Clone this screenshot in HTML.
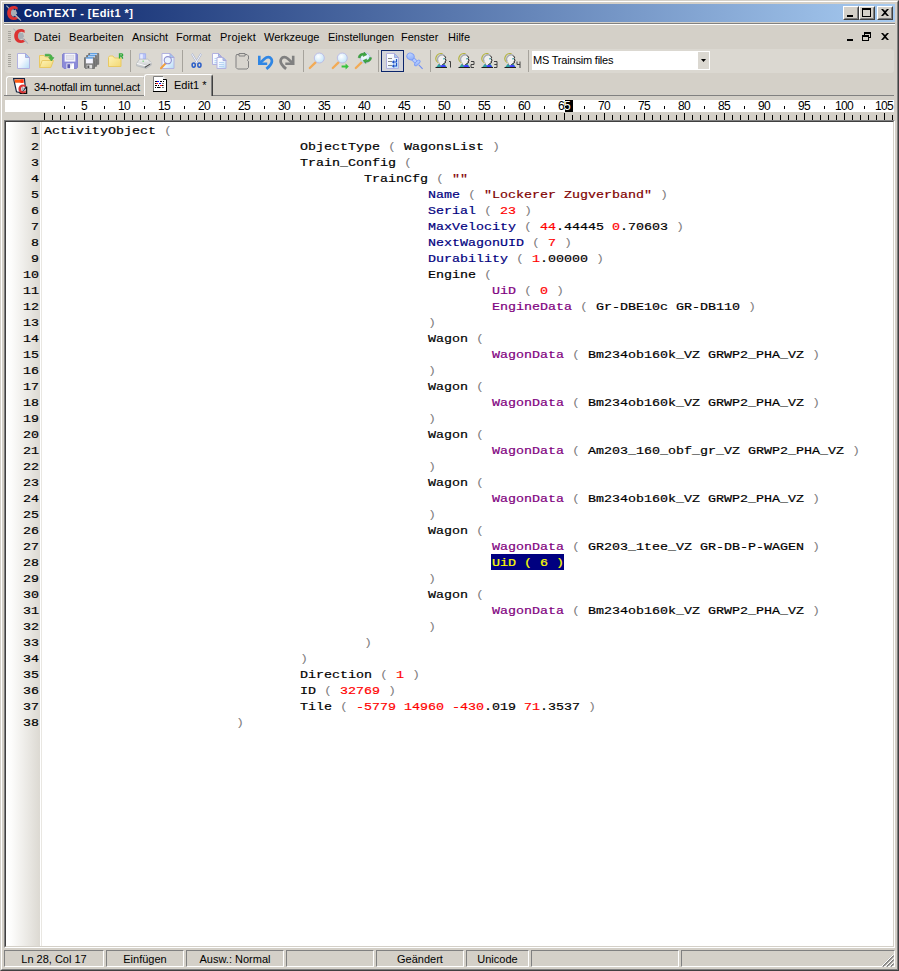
<!DOCTYPE html><html><head><meta charset="utf-8"><title>ConTEXT - [Edit1 *]</title><style>
*{margin:0;padding:0;box-sizing:border-box}
html,body{width:899px;height:971px;overflow:hidden;background:#d4d0c8}
body{position:relative;font-family:"Liberation Sans",sans-serif;font-size:11px;color:#000}
.a{position:absolute}
.t{position:absolute;white-space:pre;line-height:13px;height:13px}
.ln{position:absolute;left:0;width:39px;text-align:right;font:11.8px/16px "Liberation Mono",monospace;-webkit-text-stroke:0.2px;transform:scaleX(1.1299);transform-origin:100% 0;height:16px;color:#000}
.cl{position:absolute;left:44px;white-space:pre;font:11.8px/16px "Liberation Mono",monospace;-webkit-text-stroke:0.2px;transform:scaleX(1.1299);transform-origin:0 0;height:16px;color:#000}
.k{color:#000080}.p{color:#800080}.g{color:#808080;-webkit-text-stroke:0}.r{color:#ff0000}.s{color:#800000}
.sel{color:#ffff00}
.rn{position:absolute;top:100px;width:40px;text-align:center;font-size:12px;letter-spacing:-0.7px;line-height:13px;height:13px}
.sb{position:absolute;top:950px;height:17px;border:1px solid;border-color:#808080 #fff #fff #808080;text-align:center;font-size:11px;line-height:17px}
</style></head><body>
<div class="a" style="left:0;top:0;width:899px;height:971px;border:1px solid;border-color:#d4d0c8 #404040 #404040 #d4d0c8"></div>
<div class="a" style="left:1px;top:1px;width:897px;height:969px;border:1px solid;border-color:#fff #808080 #808080 #fff"></div>
<div class="a" style="left:4px;top:4px;width:891px;height:18px;background:linear-gradient(90deg,#0a246a,#a6caf0)"></div>
<div class="t" style="left:24px;top:6px;color:#fff;font-weight:bold;font-size:11px;line-height:14px;height:14px;letter-spacing:0.45px">ConTEXT - [Edit1 *]</div>
<div class="a" style="left:843px;top:6px;width:16px;height:14px;background:#d4d0c8;border:1px solid;border-color:#fff #404040 #404040 #fff"><div class="a" style="left:0;top:0;width:14px;height:12px;border:1px solid;border-color:#d4d0c8 #808080 #808080 #d4d0c8"></div><div class="a" style="left:3px;top:8px;width:6px;height:2px;background:#000"></div></div>
<div class="a" style="left:859px;top:6px;width:16px;height:14px;background:#d4d0c8;border:1px solid;border-color:#fff #404040 #404040 #fff"><div class="a" style="left:0;top:0;width:14px;height:12px;border:1px solid;border-color:#d4d0c8 #808080 #808080 #d4d0c8"></div><div class="a" style="left:2px;top:1px;width:9px;height:9px;border:1px solid #000;border-top-width:2px"></div></div>
<div class="a" style="left:877px;top:6px;width:16px;height:14px;background:#d4d0c8;border:1px solid;border-color:#fff #404040 #404040 #fff"><div class="a" style="left:0;top:0;width:14px;height:12px;border:1px solid;border-color:#d4d0c8 #808080 #808080 #d4d0c8"></div><svg class="a" style="left:3px;top:2px" width="8" height="7" viewBox="0 0 8 7"><path d="M0 0h2L4 2 6 0h2L5 3.5 8 7H6L4 5 2 7H0L3 3.5z" fill="#000"/></svg></div>
<div class="a" style="left:4px;top:23px;width:891px;height:1px;background:#808080"></div>
<div class="a" style="left:4px;top:24px;width:891px;height:1px;background:#fff"></div>
<div class="a" style="left:8px;top:31px;width:3px;height:1px;background:#a6a39c"></div>
<div class="a" style="left:8px;top:33px;width:3px;height:1px;background:#a6a39c"></div>
<div class="a" style="left:8px;top:35px;width:3px;height:1px;background:#a6a39c"></div>
<div class="a" style="left:8px;top:37px;width:3px;height:1px;background:#a6a39c"></div>
<div class="a" style="left:8px;top:39px;width:3px;height:1px;background:#a6a39c"></div>
<div class="a" style="left:8px;top:41px;width:3px;height:1px;background:#a6a39c"></div>
<div class="t" style="left:34px;top:31px;letter-spacing:0.2px;">Datei</div>
<div class="t" style="left:69px;top:31px;letter-spacing:0.15px;">Bearbeiten</div>
<div class="t" style="left:132px;top:31px;">Ansicht</div>
<div class="t" style="left:176px;top:31px;">Format</div>
<div class="t" style="left:220px;top:31px;letter-spacing:0.25px;">Projekt</div>
<div class="t" style="left:264px;top:31px;">Werkzeuge</div>
<div class="t" style="left:328px;top:31px;">Einstellungen</div>
<div class="t" style="left:401px;top:31px;">Fenster</div>
<div class="t" style="left:448px;top:31px;">Hilfe</div>
<div class="a" style="left:847px;top:39px;width:6px;height:2px;background:#000"></div>
<div class="a" style="left:864px;top:32px;width:7px;height:6px;border:1px solid #000;border-top-width:2px"></div>
<div class="a" style="left:862px;top:35px;width:7px;height:6px;border:1px solid #000;border-top-width:2px;background:#d4d0c8"></div>
<svg class="a" style="left:881px;top:33px" width="8" height="7" viewBox="0 0 8 7"><path d="M0 0h2L4 2 6 0h2L5 3.5 8 7H6L4 5 2 7H0L3 3.5z" fill="#000"/></svg>
<div class="a" style="left:5px;top:49px;width:889px;height:24px;background:#dbd8d1;border-radius:3px"></div>
<div class="a" style="left:8px;top:54px;width:3px;height:1px;background:#a6a39c"></div>
<div class="a" style="left:8px;top:56px;width:3px;height:1px;background:#a6a39c"></div>
<div class="a" style="left:8px;top:58px;width:3px;height:1px;background:#a6a39c"></div>
<div class="a" style="left:8px;top:60px;width:3px;height:1px;background:#a6a39c"></div>
<div class="a" style="left:8px;top:62px;width:3px;height:1px;background:#a6a39c"></div>
<div class="a" style="left:8px;top:64px;width:3px;height:1px;background:#a6a39c"></div>
<div class="a" style="left:8px;top:66px;width:3px;height:1px;background:#a6a39c"></div>
<div class="a" style="left:130px;top:50px;width:1px;height:22px;background:#a6a39c"></div>
<div class="a" style="left:182px;top:50px;width:1px;height:22px;background:#a6a39c"></div>
<div class="a" style="left:303px;top:50px;width:1px;height:22px;background:#a6a39c"></div>
<div class="a" style="left:378px;top:50px;width:1px;height:22px;background:#a6a39c"></div>
<div class="a" style="left:430px;top:50px;width:1px;height:22px;background:#a6a39c"></div>
<div class="a" style="left:528px;top:50px;width:1px;height:22px;background:#a6a39c"></div>
<div class="a" style="left:532px;top:51px;width:178px;height:19px;background:#fff"></div>
<div class="a" style="left:698px;top:52px;width:11px;height:17px;background:#dbd8d1"></div>
<svg class="a" style="left:701px;top:59px" width="5" height="3" viewBox="0 0 5 3"><path d="M0 0h5L2.5 3z" fill="#000"/></svg>
<div class="t" style="left:533px;top:54px;letter-spacing:-0.2px">MS Trainsim files</div>
<div class="a" style="left:4px;top:95px;width:890px;height:1px;background:#808080"></div>
<div class="a" style="left:6px;top:76px;width:139px;height:19px;border:1px solid;border-color:#fff #808080 transparent #fff;border-bottom:0;border-radius:3px 3px 0 0"></div>
<div class="t" style="left:34px;top:81px;letter-spacing:-0.2px">34-notfall im tunnel.act</div>
<div class="a" style="left:144px;top:74px;width:69px;height:22px;background:#d4d0c8;border:1px solid;border-color:#fff #404040 transparent #fff;border-bottom:0;border-radius:3px 3px 0 0"></div>
<div class="a" style="left:211px;top:76px;width:1px;height:20px;background:#808080"></div>
<div class="t" style="left:174px;top:79px">Edit1 *</div>
<svg class="a" width="0" height="0" style="left:0;top:0"><defs>
<linearGradient id="gp" x1="0" y1="0" x2="1" y2="1"><stop offset="0" stop-color="#fff"/><stop offset="0.45" stop-color="#f4f8ff"/><stop offset="1" stop-color="#b4dcf6"/></linearGradient>
<linearGradient id="gf" x1="0" y1="0" x2="1" y2="1"><stop offset="0" stop-color="#fdf3b8"/><stop offset="1" stop-color="#f3d873"/></linearGradient>
<radialGradient id="gl" cx="0.4" cy="0.35" r="0.7"><stop offset="0" stop-color="#fff"/><stop offset="1" stop-color="#bfe2f8"/></radialGradient>
<linearGradient id="gpr" x1="0" y1="0" x2="0" y2="1"><stop offset="0" stop-color="#f2f2f2"/><stop offset="1" stop-color="#b8bcc0"/></linearGradient>
<linearGradient id="gpin" x1="0" y1="0" x2="1" y2="1"><stop offset="0" stop-color="#c8dcff"/><stop offset="1" stop-color="#86a8fa"/></linearGradient>
</defs></svg>
<svg class="a" style="left:6px;top:5px" width="16" height="16" viewBox="0 0 16 16" ><path d="M0.4 0.6L15 15.6" stroke="#aeb4bb" stroke-width="1.1" fill="none"/>
<path d="M5 5.2L7 4 8.4 5.2 9.6 4.2 11.2 8.6 9.6 10 8 11.4 6 11.4 4.8 9z" fill="#a9aeb5"/>
<path d="M11.6 4.9V2.2C10.6 1.5 9.2 1.1 7.6 1.1 3.9 1.1 1.2 4 1.2 8c0 4 2.7 6.9 6.4 6.9 1.6 0 3-.4 4.2-1.2v-2.9c-1 .9-2.2 1.4-3.5 1.4-2.1 0-3.4-1.7-3.4-4.2 0-2.500 1.300-4.200 3.400-4.200 1.200 0 2.300.400 3.300 1.100z" fill="#dc3232"/>
<path d="M9.2 10.2L13.4 14" stroke="#aeb4bb" stroke-width="1.2" fill="none"/></svg>
<svg class="a" style="left:13px;top:28px" width="16" height="16" viewBox="0 0 16 16" ><path d="M0.4 0.6L15 15.6" stroke="#aeb4bb" stroke-width="1.1" fill="none"/>
<path d="M5 5.2L7 4 8.4 5.2 9.6 4.2 11.2 8.6 9.6 10 8 11.4 6 11.4 4.8 9z" fill="#a9aeb5"/>
<path d="M11.6 4.9V2.2C10.6 1.5 9.2 1.1 7.6 1.1 3.9 1.1 1.2 4 1.2 8c0 4 2.7 6.9 6.4 6.9 1.6 0 3-.4 4.2-1.2v-2.9c-1 .9-2.2 1.4-3.5 1.4-2.1 0-3.4-1.7-3.4-4.2 0-2.500 1.300-4.200 3.400-4.200 1.200 0 2.300.400 3.300 1.100z" fill="#dc3232"/>
<path d="M9.2 10.2L13.4 14" stroke="#aeb4bb" stroke-width="1.2" fill="none"/></svg>
<svg class="a" style="left:17px;top:53px" width="13" height="16" viewBox="0 0 13 16" ><path d="M0.5 0.5H8.5L12.5 4.5V15.5H0.5z" fill="url(#gp)" stroke="#b2b2e0" stroke-width="1"/><path d="M8.5 0.5V4.5H12.5z" fill="#9ccdf4" stroke="#a9a8da" stroke-width="1" stroke-linejoin="round"/></svg>
<svg class="a" style="left:39px;top:53px" width="16" height="16" viewBox="0 0 16 16" ><path d="M0.5 14.5V2.500h4.500l1.500 1.500h6v2.500" fill="#f7e79e" stroke="#e9c963"/>
<path d="M0.600 14.500L3.200 7.500h11.300L11.800 14.500z" fill="url(#gf)" stroke="#e9c963"/>
<path d="M6.200 1.200h3.600c2.200 0 3.400 1.400 3.600 3.400h1.600L12.400 8 9.600 4.600h1.600C11 3.600 10.400 3.100 9.400 3.100H6.200z" fill="#4cb548" stroke="#2e9a3a" stroke-width="0.5"/></svg>
<svg class="a" style="left:62px;top:53px" width="16" height="16" viewBox="0 0 16 16" ><path d="M1.500 0.500h13l1 1v13l-1 1h-12.500l-1.500-1.500v-12.500z" fill="#8b8bd9" stroke="#7a7acb" stroke-width="0.800"/>
<rect x="2.600" y="0.600" width="10.800" height="8" fill="#f4f4fb"/><rect x="4.200" y="2.600" width="7.600" height="4" fill="#e3e3ec" stroke="#d0d0dd" stroke-width="0.600"/>
<rect x="4.400" y="10.400" width="7.600" height="5.600" fill="#e9e9f2"/><rect x="5.400" y="11.200" width="2.600" height="4" fill="#5a5ab0"/><path d="M8 16l2.500-5.600h1.500V16z" fill="#fff"/></svg>
<svg class="a" style="left:84px;top:53px" width="16" height="16" viewBox="0 0 16 16" ><g transform="translate(4.2 0)"><path d="M0.500 0.500h10v10.800h-9l-1-1z" fill="#7d7d7d" stroke="#6b6b6b" stroke-width="0.800"/><rect x="1.900" y="0.400" width="7" height="5.800" fill="#f6f6ff"/><rect x="1.900" y="0.200" width="7" height="1.200" fill="#4a98e6"/><rect x="2.700" y="7.600" width="5.400" height="3.700" fill="#e0e0e0"/><rect x="3.400" y="8.300" width="1.900" height="2.600" fill="#555"/></g><g transform="translate(2.1 2)"><path d="M0.500 0.500h10v10.800h-9l-1-1z" fill="#7d7d7d" stroke="#6b6b6b" stroke-width="0.800"/><rect x="1.900" y="0.400" width="7" height="5.800" fill="#f6f6ff"/><rect x="1.900" y="0.200" width="7" height="1.200" fill="#4a98e6"/><rect x="2.700" y="7.600" width="5.400" height="3.700" fill="#e0e0e0"/><rect x="3.400" y="8.300" width="1.900" height="2.600" fill="#555"/></g><g transform="translate(0 4.2)"><path d="M0.500 0.500h10v10.800h-9l-1-1z" fill="#7d7d7d" stroke="#6b6b6b" stroke-width="0.800"/><rect x="1.900" y="0.400" width="7" height="5.800" fill="#f6f6ff"/><rect x="1.900" y="0.200" width="7" height="1.200" fill="#4a98e6"/><rect x="2.700" y="7.600" width="5.400" height="3.700" fill="#e0e0e0"/><rect x="3.400" y="8.300" width="1.900" height="2.600" fill="#555"/></g></svg>
<svg class="a" style="left:108px;top:53px" width="16" height="16" viewBox="0 0 16 16" ><path d="M0.500 13.500V4.500l1-1.500h3.500l1.500 2h6.500v8.500z" fill="url(#gf)" stroke="#e9c963"/>
<path d="M11.500 5.500V0.800h2.300c1.200 0 1.200 2.200 0 2.200h-2.300M13.500 3l1.300 2.600" fill="none" stroke="#2fa83a" stroke-width="1.300"/></svg>
<svg class="a" style="left:136px;top:53px" width="16" height="16" viewBox="0 0 16 16" ><path d="M3.800 6V0.700h5.800v5.300z" fill="#b9c4fb" stroke="#9aa7ee" stroke-width="0.700"/><path d="M4.200 1.200h2.600v4.600h-2.600z" fill="#e6ebff"/>
<path d="M0.600 10.400L3.600 6.200h8L15.200 9.400v2.800l-5 3.200L0.600 12.800z" fill="url(#gpr)" stroke="#b0b4b8" stroke-width="0.700"/>
<path d="M0.800 10.400l9.400 2.600 5-3.400" fill="none" stroke="#fff" stroke-width="0.900"/>
<path d="M8.800 13.700l5.600-3.400v1.200l-5.600 3.400z" fill="#4a4a4a"/><rect x="6.400" y="7.700" width="1.600" height="0.900" fill="#5fd060"/></svg>
<svg class="a" style="left:160px;top:53px" width="15" height="17" viewBox="0 0 15 17" ><g transform="translate(1.500 0)"><path d="M0.5 0.5H8.5L12.5 4.5V15.5H0.5z" fill="url(#gp)" stroke="#b2b2e0" stroke-width="1"/><path d="M8.5 0.5V4.5H12.5z" fill="#9ccdf4" stroke="#a9a8da" stroke-width="1" stroke-linejoin="round"/></g><path d="M6.200 9.800L1 15.200" stroke="#f0a040" stroke-width="2" stroke-linecap="round"/>
<circle cx="7.800" cy="7.200" r="3.600" fill="#e8f2ff" fill-opacity="0.85" stroke="#9090d0" stroke-width="1.100"/></svg>
<svg class="a" style="left:190px;top:53px" width="13" height="16" viewBox="0 0 13 16" ><path d="M1.8 0.8L7.4 10M11.2 0.8L5.6 10" stroke="#a2aed0" stroke-width="1.9"/><path d="M1.8 0.8L7.4 10M11.2 0.8L5.6 10" stroke="#fff" stroke-width="0.9"/>
<ellipse cx="3.7" cy="12.1" rx="1.6" ry="2.1" fill="none" stroke="#2c5fc8" stroke-width="1.5"/><ellipse cx="9.4" cy="12.1" rx="1.6" ry="2.1" fill="none" stroke="#2c5fc8" stroke-width="1.5"/></svg>
<svg class="a" style="left:212px;top:53px" width="15" height="16" viewBox="0 0 15 16" ><path d="M0.5 0.5H6.5L9.5 3.5V11.5H0.5z" fill="url(#gp)" stroke="#b2b2e0" stroke-width="1"/><path d="M6.5 0.5V3.5H9.5z" fill="#9ccdf4" stroke="#a9a8da" stroke-width="1" stroke-linejoin="round"/><path d="M2.500 5.500h5M2.500 7.500h5M2.500 9.500h5" stroke="#b8d4f4" stroke-width="1"/><g transform="translate(4.500 4)"><path d="M0.5 0.5H6.5L9.5 3.5V11.5H0.5z" fill="url(#gp)" stroke="#b2b2e0" stroke-width="1"/><path d="M6.5 0.5V3.5H9.5z" fill="#9ccdf4" stroke="#a9a8da" stroke-width="1" stroke-linejoin="round"/><path d="M2.500 5.500h5M2.500 7.500h5M2.500 9.500h5" stroke="#b8d4f4" stroke-width="1"/></g></svg>
<svg class="a" style="left:234px;top:52px" width="16" height="18" viewBox="0 0 16 18" ><path d="M2.5 2.5h2.5v-1h6v1h2l1.5 1.5v3.2l-1.2 1 1.2 1v6.300l-1.500 1.500h-9.500l-1.500-1.500v-11.500z" fill="#d8d5ce" stroke="#808080" stroke-width="1"/><path d="M5 2.5v1.500h6v-1.500" fill="none" stroke="#808080"/></svg>
<svg class="a" style="left:257px;top:55px" width="17" height="15" viewBox="0 0 17 15" ><path d="M2.3 0.8V8.7H10.2" fill="none" stroke="#2f86e4" stroke-width="2.6"/><path d="M3 8L7.6 3.7C10 1.6 12.8 1.7 14.2 3.8 16 6.6 13.8 10.4 9.4 13.9" fill="none" stroke="#2f86e4" stroke-width="2.7"/></svg>
<svg class="a" style="left:279px;top:55px" width="17" height="15" viewBox="0 0 17 15" ><g transform="translate(16.5 0) scale(-1 1)"><path d="M2.3 0.8V8.7H10.2" fill="none" stroke="#808080" stroke-width="2.6"/><path d="M3 8L7.6 3.7C10 1.6 12.8 1.7 14.2 3.8 16 6.6 13.8 10.4 9.4 13.9" fill="none" stroke="#808080" stroke-width="2.7"/></g></svg>
<svg class="a" style="left:308px;top:52px" width="18" height="18" viewBox="0 0 18 18" ><path d="M7.600 10.400L1.800 16" stroke="#f2aa55" stroke-width="2.300" stroke-linecap="round"/><circle cx="11.300" cy="6" r="5" fill="url(#gl)" stroke="#b9b9e4" stroke-width="0.900"/></svg>
<svg class="a" style="left:331px;top:52px" width="19" height="18" viewBox="0 0 19 18" ><path d="M7.600 10.400L1.800 16" stroke="#f2aa55" stroke-width="2.300" stroke-linecap="round"/><circle cx="11.300" cy="6" r="5" fill="url(#gl)" stroke="#b9b9e4" stroke-width="0.900"/><path d="M10.600 13.600h4v-2l3.200 3-3.200 3v-2h-4z" fill="#35c43c"/></svg>
<svg class="a" style="left:354px;top:52px" width="19" height="18" viewBox="0 0 19 18" ><path d="M7.600 10.400L1.800 16" stroke="#f2aa55" stroke-width="2.300" stroke-linecap="round"/><circle cx="11.300" cy="6" r="5" fill="url(#gl)" stroke="#b9b9e4" stroke-width="0.900"/><path d="M4.200 5.600c.4-3 2.800-4.600 5.600-4.200l.3-1.400 2.700 2.800-3.600 1.700.3-1.300C7.900 3 6.600 4 6.200 5.900z" fill="#3da640" stroke="#2b8a35" stroke-width="0.500"/><path d="M17.600 5.800c-.4 3-2.800 4.600-5.600 4.200l-.3 1.400L9 8.600l3.600-1.700-.3 1.300c1.600.2 2.900-.8 3.300-2.700z" fill="#3da640" stroke="#2b8a35" stroke-width="0.500"/></svg>
<div class="a" style="left:381px;top:50px;width:23px;height:22px;background:#d3d4d9;border:1px solid #0a246a"></div>
<svg class="a" style="left:386px;top:53px" width="13" height="16" viewBox="0 0 13 16" ><path d="M0.5 0.5H8.5L12.5 4.5V15.5H0.5z" fill="url(#gp)" stroke="#b2b2e0" stroke-width="1"/><path d="M8.5 0.5V4.5H12.5z" fill="#9ccdf4" stroke="#a9a8da" stroke-width="1" stroke-linejoin="round"/><path d="M2 5.500h4M2 8.500h4M2 12.500h4" stroke="#8a8a8a" stroke-width="1"/>
<path d="M10.500 6v3h-3.500" fill="none" stroke="#1e50c8" stroke-width="1.200"/><path d="M5.800 9l2.400-2v4z" fill="#1e50c8"/>
<path d="M10.500 10v3h-3.500" fill="none" stroke="#1e50c8" stroke-width="1.200"/><path d="M5.800 13l2.400-2v4z" fill="#1e50c8"/></svg>
<svg class="a" style="left:406px;top:52px" width="19" height="18" viewBox="0 0 19 18" ><path d="M12.8 12.8L16.6 16.8" stroke="#6f8df4" stroke-width="1.1"/>
<path d="M6.6 6.6L10.4 10.4" stroke="#7d9cf6" stroke-width="4"/><path d="M6.6 6.6L10.4 10.4" stroke="#b4ccff" stroke-width="2.4"/>
<ellipse cx="4.5" cy="4.4" rx="3.7" ry="3.3" transform="rotate(25 4.5 4.4)" fill="url(#gpin)" stroke="#7d9cf6" stroke-width="0.9"/>
<ellipse cx="11.3" cy="11" rx="1.7" ry="3.7" transform="rotate(45 11.3 11)" fill="url(#gpin)" stroke="#7d9cf6" stroke-width="0.9"/></svg>
<svg class="a" style="left:435px;top:53px" width="17" height="16" viewBox="0 0 17 16" ><path d="M1 14.500L3.600 11h6l2.400 3.500z" fill="#2fa3a3"/><path d="M5 12h4.600l2 2.500H6.500z" fill="#3c3cff"/><path d="M0.500 14.500h11.500" stroke="#202020" stroke-width="1"/>
<path d="M4.800 12V9.500" stroke="#202020" stroke-width="1"/>
<path d="M3.400 9.800C1.200 8.600.3 6.200 1.200 3.800 2.200 1.200 5 0 7.600.8" fill="none" stroke="#b2b23c" stroke-width="1.100"/>
<path d="M4.200 9.600C2.600 8 2.400 5.600 3.600 3.800 4.800 2 7 1.600 9 2.400l1.600 1.800-.6 1.400 1.200 1.800-1 .6.200 1.800-1.800.8-1.200 1.400H5z" fill="#f0f0f0" stroke="#d0d0d0" stroke-width="0.500"/>
<path d="M3.200 8.600C2 6.600 2.600 4 4.400 2.800 5.800 1.800 7.600 1.600 9 2.200" fill="none" stroke="#a8acb4" stroke-width="1.400"/>
<path d="M9 2.400l1.600 1.800-.6 1.400 1.200 1.800-1 .6.200 1.800-1.800.8-1.200 1.400" fill="none" stroke="#202020" stroke-width="1"/>
<rect x="8.200" y="5.200" width="1.400" height="1.200" fill="#2fa3a3"/><g transform="translate(12.500 8)"><path d="M1.500 0.500h1.500v6" fill="none" stroke="#404040" stroke-width="1"/></g></svg>
<svg class="a" style="left:458px;top:53px" width="17" height="16" viewBox="0 0 17 16" ><path d="M1 14.500L3.600 11h6l2.400 3.500z" fill="#2fa3a3"/><path d="M5 12h4.600l2 2.500H6.500z" fill="#3c3cff"/><path d="M0.500 14.500h11.500" stroke="#202020" stroke-width="1"/>
<path d="M4.800 12V9.500" stroke="#202020" stroke-width="1"/>
<path d="M3.400 9.800C1.200 8.600.3 6.200 1.200 3.800 2.200 1.200 5 0 7.600.8" fill="none" stroke="#b2b23c" stroke-width="1.100"/>
<path d="M4.200 9.600C2.600 8 2.400 5.600 3.600 3.800 4.800 2 7 1.600 9 2.400l1.600 1.800-.6 1.400 1.200 1.800-1 .6.200 1.800-1.800.8-1.200 1.400H5z" fill="#f0f0f0" stroke="#d0d0d0" stroke-width="0.500"/>
<path d="M3.200 8.600C2 6.600 2.600 4 4.400 2.800 5.800 1.800 7.600 1.600 9 2.200" fill="none" stroke="#a8acb4" stroke-width="1.400"/>
<path d="M9 2.400l1.600 1.800-.6 1.400 1.200 1.800-1 .6.200 1.800-1.800.8-1.200 1.400" fill="none" stroke="#202020" stroke-width="1"/>
<rect x="8.200" y="5.200" width="1.400" height="1.200" fill="#2fa3a3"/><g transform="translate(12.500 8)"><path d="M0.500 0.500h3v3h-3v3h3" fill="none" stroke="#404040" stroke-width="1"/></g></svg>
<svg class="a" style="left:481px;top:53px" width="17" height="16" viewBox="0 0 17 16" ><path d="M1 14.500L3.600 11h6l2.400 3.500z" fill="#2fa3a3"/><path d="M5 12h4.600l2 2.500H6.500z" fill="#3c3cff"/><path d="M0.500 14.500h11.500" stroke="#202020" stroke-width="1"/>
<path d="M4.800 12V9.500" stroke="#202020" stroke-width="1"/>
<path d="M3.400 9.800C1.200 8.600.3 6.200 1.200 3.800 2.200 1.200 5 0 7.600.8" fill="none" stroke="#b2b23c" stroke-width="1.100"/>
<path d="M4.200 9.600C2.600 8 2.400 5.600 3.600 3.800 4.800 2 7 1.600 9 2.400l1.600 1.800-.6 1.400 1.200 1.800-1 .6.200 1.800-1.800.8-1.200 1.400H5z" fill="#f0f0f0" stroke="#d0d0d0" stroke-width="0.500"/>
<path d="M3.200 8.600C2 6.600 2.600 4 4.400 2.800 5.800 1.800 7.600 1.600 9 2.200" fill="none" stroke="#a8acb4" stroke-width="1.400"/>
<path d="M9 2.400l1.600 1.800-.6 1.400 1.200 1.800-1 .6.200 1.800-1.800.8-1.200 1.400" fill="none" stroke="#202020" stroke-width="1"/>
<rect x="8.200" y="5.200" width="1.400" height="1.200" fill="#2fa3a3"/><g transform="translate(12.500 8)"><path d="M0.500 0.500h3v6h-3M0.800 3.500h2.700" fill="none" stroke="#404040" stroke-width="1"/></g></svg>
<svg class="a" style="left:504px;top:53px" width="17" height="16" viewBox="0 0 17 16" ><path d="M1 14.500L3.600 11h6l2.400 3.500z" fill="#2fa3a3"/><path d="M5 12h4.600l2 2.500H6.500z" fill="#3c3cff"/><path d="M0.500 14.500h11.500" stroke="#202020" stroke-width="1"/>
<path d="M4.800 12V9.500" stroke="#202020" stroke-width="1"/>
<path d="M3.400 9.800C1.200 8.600.3 6.200 1.200 3.800 2.200 1.200 5 0 7.600.8" fill="none" stroke="#b2b23c" stroke-width="1.100"/>
<path d="M4.200 9.600C2.600 8 2.400 5.600 3.600 3.800 4.800 2 7 1.600 9 2.400l1.600 1.800-.6 1.400 1.200 1.800-1 .6.200 1.800-1.800.8-1.200 1.400H5z" fill="#f0f0f0" stroke="#d0d0d0" stroke-width="0.500"/>
<path d="M3.200 8.600C2 6.600 2.600 4 4.400 2.800 5.800 1.800 7.600 1.600 9 2.200" fill="none" stroke="#a8acb4" stroke-width="1.400"/>
<path d="M9 2.400l1.600 1.800-.6 1.400 1.200 1.800-1 .6.200 1.800-1.800.8-1.200 1.400" fill="none" stroke="#202020" stroke-width="1"/>
<rect x="8.200" y="5.200" width="1.400" height="1.200" fill="#2fa3a3"/><g transform="translate(12.500 8)"><path d="M0.500 0.500v3h3M3.500 0.500v6.500" fill="none" stroke="#404040" stroke-width="1"/></g></svg>
<svg class="a" style="left:13px;top:78px" width="15" height="16" viewBox="0 0 15 16" ><path d="M0.600 0.600h10.800l1 9.500-3.900 4.700-5-1z" fill="#fff" stroke="#14233f" stroke-width="1.200"/>
<path d="M1.500 1.500h9v3.300h-8.600z" fill="#ff5a10"/><path d="M7.500 1.500h3v3.300h-3z" fill="#ff3010"/>
<path d="M13.600 8.500v6.800h-7" fill="none" stroke="#101010" stroke-width="1.300"/>
<path d="M12.700 9.400V7.400C12 6.900 11 6.600 9.900 6.600 7.300 6.600 5.400 8.500 5.400 11c0 2.500 1.900 4.400 4.500 4.400 1.100 0 2.100-.3 2.900-.8v-2.100c-.7.600-1.500.9-2.400.9-1.400 0-2.400-1-2.400-2.400 0-1.400 1-2.400 2.400-2.400.8 0 1.600.3 2.300.8z" fill="#dc3232"/>
<path d="M8.600 9.400l1.400-.6 1.400 2.600-1.400 1.400-1.600-.6z" fill="#a9aeb5"/></svg>
<svg class="a" style="left:153px;top:76px" width="14" height="16" viewBox="0 0 14 16" ><path d="M0.500 0.500h9.500l3.500 3.500v11h-13z" fill="#fff"/>
<path d="M0.500 15V0.500h9.500" fill="none" stroke="#808080" stroke-width="1"/>
<path d="M10 0.500l3.500 3.500h-3.500z" fill="#e8e8e8"/><path d="M10 3.5h3.5" stroke="#000" stroke-width="1"/><path d="M13.5 3.5v12" stroke="#000" stroke-width="1"/><path d="M0 15.5h14" stroke="#000" stroke-width="1"/>
<path d="M2 5.500h2M7 5.500h2M10 5.500h1M2 7.500h1M9.500 7.500h1M2 9.500h2M5 9.500h1M9 9.500h1.500M2 11.500h1M4 11.500h3.500M9.500 11.500h1" stroke="#000" stroke-width="1.100"/>
<path d="M4 5.500h2M6 7.500h2" stroke="#1010ff" stroke-width="1.100"/><path d="M3 7.500h2M7 9.500h2" stroke="#ff1010" stroke-width="1.100"/></svg>
<div class="a" style="left:5px;top:100px;width:889px;height:12px;background:#fff"></div>
<div class="a" style="left:44px;top:113px;width:1px;height:7px;background:#000"></div>
<div class="a" style="left:52px;top:115px;width:1px;height:5px;background:#000"></div>
<div class="a" style="left:60px;top:115px;width:1px;height:5px;background:#000"></div>
<div class="a" style="left:68px;top:115px;width:1px;height:5px;background:#000"></div>
<div class="a" style="left:76px;top:115px;width:1px;height:5px;background:#000"></div>
<div class="a" style="left:84px;top:113px;width:1px;height:7px;background:#000"></div>
<div class="a" style="left:92px;top:115px;width:1px;height:5px;background:#000"></div>
<div class="a" style="left:100px;top:115px;width:1px;height:5px;background:#000"></div>
<div class="a" style="left:108px;top:115px;width:1px;height:5px;background:#000"></div>
<div class="a" style="left:116px;top:115px;width:1px;height:5px;background:#000"></div>
<div class="a" style="left:124px;top:113px;width:1px;height:7px;background:#000"></div>
<div class="a" style="left:132px;top:115px;width:1px;height:5px;background:#000"></div>
<div class="a" style="left:140px;top:115px;width:1px;height:5px;background:#000"></div>
<div class="a" style="left:148px;top:115px;width:1px;height:5px;background:#000"></div>
<div class="a" style="left:156px;top:115px;width:1px;height:5px;background:#000"></div>
<div class="a" style="left:164px;top:113px;width:1px;height:7px;background:#000"></div>
<div class="a" style="left:172px;top:115px;width:1px;height:5px;background:#000"></div>
<div class="a" style="left:180px;top:115px;width:1px;height:5px;background:#000"></div>
<div class="a" style="left:188px;top:115px;width:1px;height:5px;background:#000"></div>
<div class="a" style="left:196px;top:115px;width:1px;height:5px;background:#000"></div>
<div class="a" style="left:204px;top:113px;width:1px;height:7px;background:#000"></div>
<div class="a" style="left:212px;top:115px;width:1px;height:5px;background:#000"></div>
<div class="a" style="left:220px;top:115px;width:1px;height:5px;background:#000"></div>
<div class="a" style="left:228px;top:115px;width:1px;height:5px;background:#000"></div>
<div class="a" style="left:236px;top:115px;width:1px;height:5px;background:#000"></div>
<div class="a" style="left:244px;top:113px;width:1px;height:7px;background:#000"></div>
<div class="a" style="left:252px;top:115px;width:1px;height:5px;background:#000"></div>
<div class="a" style="left:260px;top:115px;width:1px;height:5px;background:#000"></div>
<div class="a" style="left:268px;top:115px;width:1px;height:5px;background:#000"></div>
<div class="a" style="left:276px;top:115px;width:1px;height:5px;background:#000"></div>
<div class="a" style="left:284px;top:113px;width:1px;height:7px;background:#000"></div>
<div class="a" style="left:292px;top:115px;width:1px;height:5px;background:#000"></div>
<div class="a" style="left:300px;top:115px;width:1px;height:5px;background:#000"></div>
<div class="a" style="left:308px;top:115px;width:1px;height:5px;background:#000"></div>
<div class="a" style="left:316px;top:115px;width:1px;height:5px;background:#000"></div>
<div class="a" style="left:324px;top:113px;width:1px;height:7px;background:#000"></div>
<div class="a" style="left:332px;top:115px;width:1px;height:5px;background:#000"></div>
<div class="a" style="left:340px;top:115px;width:1px;height:5px;background:#000"></div>
<div class="a" style="left:348px;top:115px;width:1px;height:5px;background:#000"></div>
<div class="a" style="left:356px;top:115px;width:1px;height:5px;background:#000"></div>
<div class="a" style="left:364px;top:113px;width:1px;height:7px;background:#000"></div>
<div class="a" style="left:372px;top:115px;width:1px;height:5px;background:#000"></div>
<div class="a" style="left:380px;top:115px;width:1px;height:5px;background:#000"></div>
<div class="a" style="left:388px;top:115px;width:1px;height:5px;background:#000"></div>
<div class="a" style="left:396px;top:115px;width:1px;height:5px;background:#000"></div>
<div class="a" style="left:404px;top:113px;width:1px;height:7px;background:#000"></div>
<div class="a" style="left:412px;top:115px;width:1px;height:5px;background:#000"></div>
<div class="a" style="left:420px;top:115px;width:1px;height:5px;background:#000"></div>
<div class="a" style="left:428px;top:115px;width:1px;height:5px;background:#000"></div>
<div class="a" style="left:436px;top:115px;width:1px;height:5px;background:#000"></div>
<div class="a" style="left:444px;top:113px;width:1px;height:7px;background:#000"></div>
<div class="a" style="left:452px;top:115px;width:1px;height:5px;background:#000"></div>
<div class="a" style="left:460px;top:115px;width:1px;height:5px;background:#000"></div>
<div class="a" style="left:468px;top:115px;width:1px;height:5px;background:#000"></div>
<div class="a" style="left:476px;top:115px;width:1px;height:5px;background:#000"></div>
<div class="a" style="left:484px;top:113px;width:1px;height:7px;background:#000"></div>
<div class="a" style="left:492px;top:115px;width:1px;height:5px;background:#000"></div>
<div class="a" style="left:500px;top:115px;width:1px;height:5px;background:#000"></div>
<div class="a" style="left:508px;top:115px;width:1px;height:5px;background:#000"></div>
<div class="a" style="left:516px;top:115px;width:1px;height:5px;background:#000"></div>
<div class="a" style="left:524px;top:113px;width:1px;height:7px;background:#000"></div>
<div class="a" style="left:532px;top:115px;width:1px;height:5px;background:#000"></div>
<div class="a" style="left:540px;top:115px;width:1px;height:5px;background:#000"></div>
<div class="a" style="left:548px;top:115px;width:1px;height:5px;background:#000"></div>
<div class="a" style="left:556px;top:115px;width:1px;height:5px;background:#000"></div>
<div class="a" style="left:564px;top:113px;width:1px;height:7px;background:#000"></div>
<div class="a" style="left:572px;top:115px;width:1px;height:5px;background:#000"></div>
<div class="a" style="left:580px;top:115px;width:1px;height:5px;background:#000"></div>
<div class="a" style="left:588px;top:115px;width:1px;height:5px;background:#000"></div>
<div class="a" style="left:596px;top:115px;width:1px;height:5px;background:#000"></div>
<div class="a" style="left:604px;top:113px;width:1px;height:7px;background:#000"></div>
<div class="a" style="left:612px;top:115px;width:1px;height:5px;background:#000"></div>
<div class="a" style="left:620px;top:115px;width:1px;height:5px;background:#000"></div>
<div class="a" style="left:628px;top:115px;width:1px;height:5px;background:#000"></div>
<div class="a" style="left:636px;top:115px;width:1px;height:5px;background:#000"></div>
<div class="a" style="left:644px;top:113px;width:1px;height:7px;background:#000"></div>
<div class="a" style="left:652px;top:115px;width:1px;height:5px;background:#000"></div>
<div class="a" style="left:660px;top:115px;width:1px;height:5px;background:#000"></div>
<div class="a" style="left:668px;top:115px;width:1px;height:5px;background:#000"></div>
<div class="a" style="left:676px;top:115px;width:1px;height:5px;background:#000"></div>
<div class="a" style="left:684px;top:113px;width:1px;height:7px;background:#000"></div>
<div class="a" style="left:692px;top:115px;width:1px;height:5px;background:#000"></div>
<div class="a" style="left:700px;top:115px;width:1px;height:5px;background:#000"></div>
<div class="a" style="left:708px;top:115px;width:1px;height:5px;background:#000"></div>
<div class="a" style="left:716px;top:115px;width:1px;height:5px;background:#000"></div>
<div class="a" style="left:724px;top:113px;width:1px;height:7px;background:#000"></div>
<div class="a" style="left:732px;top:115px;width:1px;height:5px;background:#000"></div>
<div class="a" style="left:740px;top:115px;width:1px;height:5px;background:#000"></div>
<div class="a" style="left:748px;top:115px;width:1px;height:5px;background:#000"></div>
<div class="a" style="left:756px;top:115px;width:1px;height:5px;background:#000"></div>
<div class="a" style="left:764px;top:113px;width:1px;height:7px;background:#000"></div>
<div class="a" style="left:772px;top:115px;width:1px;height:5px;background:#000"></div>
<div class="a" style="left:780px;top:115px;width:1px;height:5px;background:#000"></div>
<div class="a" style="left:788px;top:115px;width:1px;height:5px;background:#000"></div>
<div class="a" style="left:796px;top:115px;width:1px;height:5px;background:#000"></div>
<div class="a" style="left:804px;top:113px;width:1px;height:7px;background:#000"></div>
<div class="a" style="left:812px;top:115px;width:1px;height:5px;background:#000"></div>
<div class="a" style="left:820px;top:115px;width:1px;height:5px;background:#000"></div>
<div class="a" style="left:828px;top:115px;width:1px;height:5px;background:#000"></div>
<div class="a" style="left:836px;top:115px;width:1px;height:5px;background:#000"></div>
<div class="a" style="left:844px;top:113px;width:1px;height:7px;background:#000"></div>
<div class="a" style="left:852px;top:115px;width:1px;height:5px;background:#000"></div>
<div class="a" style="left:860px;top:115px;width:1px;height:5px;background:#000"></div>
<div class="a" style="left:868px;top:115px;width:1px;height:5px;background:#000"></div>
<div class="a" style="left:876px;top:115px;width:1px;height:5px;background:#000"></div>
<div class="a" style="left:884px;top:113px;width:1px;height:7px;background:#000"></div>
<div class="a" style="left:892px;top:115px;width:1px;height:5px;background:#000"></div>
<div class="rn" style="left:64px">5</div>
<div class="rn" style="left:104px">10</div>
<div class="rn" style="left:144px">15</div>
<div class="rn" style="left:184px">20</div>
<div class="rn" style="left:224px">25</div>
<div class="rn" style="left:264px">30</div>
<div class="rn" style="left:304px">35</div>
<div class="rn" style="left:344px">40</div>
<div class="rn" style="left:384px">45</div>
<div class="rn" style="left:424px">50</div>
<div class="rn" style="left:464px">55</div>
<div class="rn" style="left:504px">60</div>
<div class="rn" style="left:544px">65</div>
<div class="rn" style="left:584px">70</div>
<div class="rn" style="left:624px">75</div>
<div class="rn" style="left:664px">80</div>
<div class="rn" style="left:704px">85</div>
<div class="rn" style="left:744px">90</div>
<div class="rn" style="left:784px">95</div>
<div class="rn" style="left:824px">100</div>
<div class="rn" style="left:864px">105</div>
<div class="a" style="left:64px;top:106px;width:1px;height:3px;background:#000"></div>
<div class="a" style="left:104px;top:106px;width:1px;height:3px;background:#000"></div>
<div class="a" style="left:144px;top:106px;width:1px;height:3px;background:#000"></div>
<div class="a" style="left:184px;top:106px;width:1px;height:3px;background:#000"></div>
<div class="a" style="left:224px;top:106px;width:1px;height:3px;background:#000"></div>
<div class="a" style="left:264px;top:106px;width:1px;height:3px;background:#000"></div>
<div class="a" style="left:304px;top:106px;width:1px;height:3px;background:#000"></div>
<div class="a" style="left:344px;top:106px;width:1px;height:3px;background:#000"></div>
<div class="a" style="left:384px;top:106px;width:1px;height:3px;background:#000"></div>
<div class="a" style="left:424px;top:106px;width:1px;height:3px;background:#000"></div>
<div class="a" style="left:464px;top:106px;width:1px;height:3px;background:#000"></div>
<div class="a" style="left:504px;top:106px;width:1px;height:3px;background:#000"></div>
<div class="a" style="left:544px;top:106px;width:1px;height:3px;background:#000"></div>
<div class="a" style="left:584px;top:106px;width:1px;height:3px;background:#000"></div>
<div class="a" style="left:624px;top:106px;width:1px;height:3px;background:#000"></div>
<div class="a" style="left:664px;top:106px;width:1px;height:3px;background:#000"></div>
<div class="a" style="left:704px;top:106px;width:1px;height:3px;background:#000"></div>
<div class="a" style="left:744px;top:106px;width:1px;height:3px;background:#000"></div>
<div class="a" style="left:784px;top:106px;width:1px;height:3px;background:#000"></div>
<div class="a" style="left:824px;top:106px;width:1px;height:3px;background:#000"></div>
<div class="a" style="left:864px;top:106px;width:1px;height:3px;background:#000"></div>
<div class="a" style="left:565px;top:100px;width:8px;height:12px;background:#000;overflow:hidden"><div class="rn" style="left:-21px;top:0;color:#fff">65</div></div>
<div class="a" style="left:4px;top:120px;width:891px;height:828px;border:1px solid;border-color:#808080 #fff #fff #808080"></div>
<div class="a" style="left:5px;top:121px;width:889px;height:826px;background:#fff;border:1px solid;border-color:#404040 #d4d0c8 #d4d0c8 #404040"></div>
<div class="a" style="left:6px;top:122px;width:34px;height:824px;background:linear-gradient(90deg,#fff 0,#fdfdfc 15%,#dcd9d2 100%)"></div>
<div class="a" style="left:41px;top:122px;width:1px;height:824px;background:#e9e7e2"></div>
<div class="a" id="ed" style="left:0;top:123px;width:893px;height:823px;overflow:hidden">
<div class="a" style="left:491px;top:431px;width:73px;height:16px;background:#000080"></div>
<div class="ln" style="top:0px">1</div>
<div class="cl" style="top:0px">ActivityObject <span class="g">(</span></div>
<div class="ln" style="top:16px">2</div>
<div class="cl" style="top:16px">                                ObjectType <span class="g">(</span> WagonsList <span class="g">)</span></div>
<div class="ln" style="top:32px">3</div>
<div class="cl" style="top:32px">                                Train_Config <span class="g">(</span></div>
<div class="ln" style="top:48px">4</div>
<div class="cl" style="top:48px">                                        TrainCfg <span class="g">(</span> <span class="s">""</span></div>
<div class="ln" style="top:64px">5</div>
<div class="cl" style="top:64px"><span class="k">                                                Name </span><span class="g">(</span> <span class="s">"Lockerer Zugverband"</span> <span class="g">)</span></div>
<div class="ln" style="top:80px">6</div>
<div class="cl" style="top:80px"><span class="k">                                                Serial </span><span class="g">(</span><span class="r"> 23 </span><span class="g">)</span></div>
<div class="ln" style="top:96px">7</div>
<div class="cl" style="top:96px"><span class="k">                                                MaxVelocity </span><span class="g">(</span><span class="r"> 44</span>.44445 <span class="r">0</span>.70603 <span class="g">)</span></div>
<div class="ln" style="top:112px">8</div>
<div class="cl" style="top:112px"><span class="k">                                                NextWagonUID </span><span class="g">(</span><span class="r"> 7 </span><span class="g">)</span></div>
<div class="ln" style="top:128px">9</div>
<div class="cl" style="top:128px"><span class="k">                                                Durability </span><span class="g">(</span><span class="r"> 1</span>.00000 <span class="g">)</span></div>
<div class="ln" style="top:144px">10</div>
<div class="cl" style="top:144px">                                                Engine <span class="g">(</span></div>
<div class="ln" style="top:160px">11</div>
<div class="cl" style="top:160px"><span class="p">                                                        UiD </span><span class="g">(</span><span class="r"> 0 </span><span class="g">)</span></div>
<div class="ln" style="top:176px">12</div>
<div class="cl" style="top:176px"><span class="p">                                                        EngineData </span><span class="g">(</span> Gr-DBE10c GR-DB110 <span class="g">)</span></div>
<div class="ln" style="top:192px">13</div>
<div class="cl" style="top:192px"><span class="g">                                                )</span></div>
<div class="ln" style="top:208px">14</div>
<div class="cl" style="top:208px">                                                Wagon <span class="g">(</span></div>
<div class="ln" style="top:224px">15</div>
<div class="cl" style="top:224px"><span class="p">                                                        WagonData </span><span class="g">(</span> Bm234ob160k_VZ GRWP2_PHA_VZ <span class="g">)</span></div>
<div class="ln" style="top:240px">16</div>
<div class="cl" style="top:240px"><span class="g">                                                )</span></div>
<div class="ln" style="top:256px">17</div>
<div class="cl" style="top:256px">                                                Wagon <span class="g">(</span></div>
<div class="ln" style="top:272px">18</div>
<div class="cl" style="top:272px"><span class="p">                                                        WagonData </span><span class="g">(</span> Bm234ob160k_VZ GRWP2_PHA_VZ <span class="g">)</span></div>
<div class="ln" style="top:288px">19</div>
<div class="cl" style="top:288px"><span class="g">                                                )</span></div>
<div class="ln" style="top:304px">20</div>
<div class="cl" style="top:304px">                                                Wagon <span class="g">(</span></div>
<div class="ln" style="top:320px">21</div>
<div class="cl" style="top:320px"><span class="p">                                                        WagonData </span><span class="g">(</span> Am203_160_obf_gr_VZ GRWP2_PHA_VZ <span class="g">)</span></div>
<div class="ln" style="top:336px">22</div>
<div class="cl" style="top:336px"><span class="g">                                                )</span></div>
<div class="ln" style="top:352px">23</div>
<div class="cl" style="top:352px">                                                Wagon <span class="g">(</span></div>
<div class="ln" style="top:368px">24</div>
<div class="cl" style="top:368px"><span class="p">                                                        WagonData </span><span class="g">(</span> Bm234ob160k_VZ GRWP2_PHA_VZ <span class="g">)</span></div>
<div class="ln" style="top:384px">25</div>
<div class="cl" style="top:384px"><span class="g">                                                )</span></div>
<div class="ln" style="top:400px">26</div>
<div class="cl" style="top:400px">                                                Wagon <span class="g">(</span></div>
<div class="ln" style="top:416px">27</div>
<div class="cl" style="top:416px"><span class="p">                                                        WagonData </span><span class="g">(</span> GR203_1tee_VZ GR-DB-P-WAGEN <span class="g">)</span></div>
<div class="ln" style="top:432px">28</div>
<div class="cl" style="top:432px">                                                        <span class="sel">UiD ( 6 )</span></div>
<div class="ln" style="top:448px">29</div>
<div class="cl" style="top:448px"><span class="g">                                                )</span></div>
<div class="ln" style="top:464px">30</div>
<div class="cl" style="top:464px">                                                Wagon <span class="g">(</span></div>
<div class="ln" style="top:480px">31</div>
<div class="cl" style="top:480px"><span class="p">                                                        WagonData </span><span class="g">(</span> Bm234ob160k_VZ GRWP2_PHA_VZ <span class="g">)</span></div>
<div class="ln" style="top:496px">32</div>
<div class="cl" style="top:496px"><span class="g">                                                )</span></div>
<div class="ln" style="top:512px">33</div>
<div class="cl" style="top:512px"><span class="g">                                        )</span></div>
<div class="ln" style="top:528px">34</div>
<div class="cl" style="top:528px"><span class="g">                                )</span></div>
<div class="ln" style="top:544px">35</div>
<div class="cl" style="top:544px">                                Direction <span class="g">(</span><span class="r"> 1 </span><span class="g">)</span></div>
<div class="ln" style="top:560px">36</div>
<div class="cl" style="top:560px">                                ID <span class="g">(</span><span class="r"> 32769 </span><span class="g">)</span></div>
<div class="ln" style="top:576px">37</div>
<div class="cl" style="top:576px">                                Tile <span class="g">(</span><span class="r"> -5779 14960 -430</span>.019 <span class="r">71</span>.3537 <span class="g">)</span></div>
<div class="ln" style="top:592px">38</div>
<div class="cl" style="top:592px"><span class="g">                        )</span></div>
</div>
<div class="sb" style="left:4px;width:100px">Ln 28, Col 17</div>
<div class="sb" style="left:106px;width:78px">Einfügen</div>
<div class="sb" style="left:186px;width:98px">Ausw.: Normal</div>
<div class="sb" style="left:286px;width:88px"></div>
<div class="sb" style="left:376px;width:88px">Geändert</div>
<div class="sb" style="left:466px;width:63px">Unicode</div>
<div class="sb" style="left:531px;width:148px"></div>
<div class="sb" style="left:681px;width:214px"></div>
<svg class="a" style="left:881px;top:954px" width="13" height="13" viewBox="0 0 13 13"><g stroke="#808080" stroke-width="1.9"><path d="M12.5 1.5L1.5 12.5M12.5 5.5L5.5 12.5M12.5 9.5L9.5 12.5"/></g><g stroke="#fff" stroke-width="1"><path d="M12.5 0.5L0.5 12.5M12.5 4.5L4.5 12.5M12.5 8.5L8.5 12.5"/></g></svg>
</body></html>
